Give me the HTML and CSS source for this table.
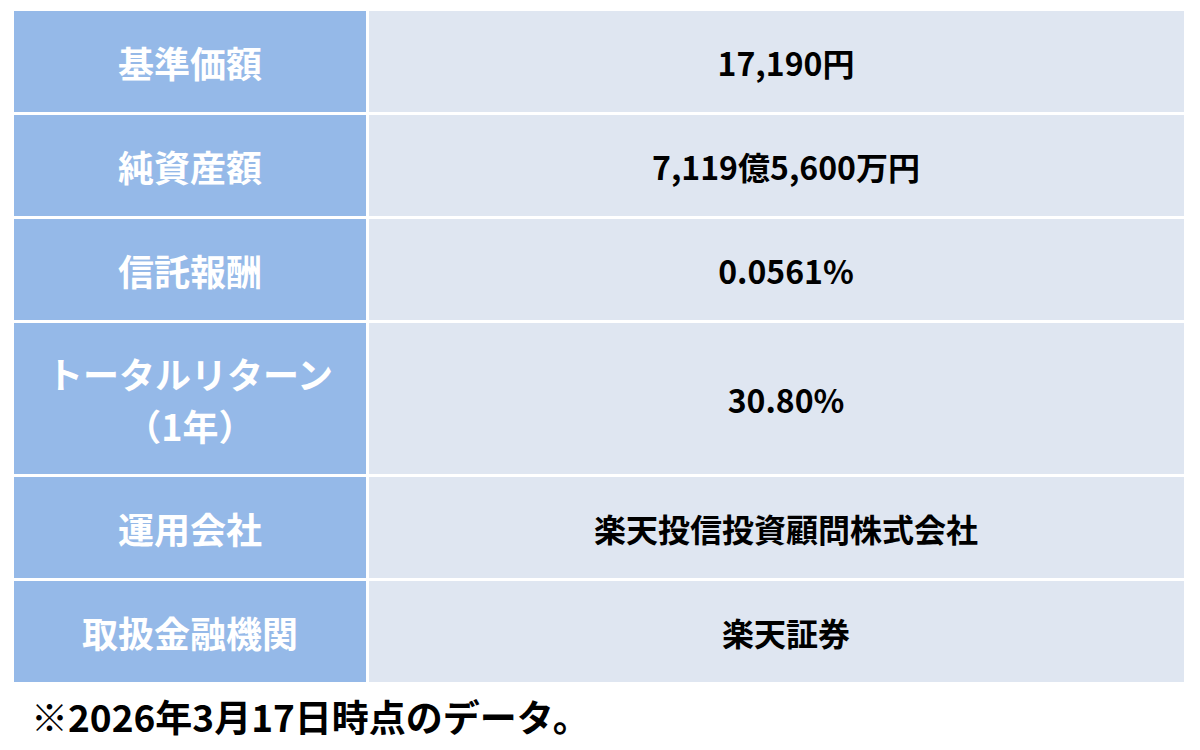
FILE: index.html
```html
<!DOCTYPE html>
<html lang="ja">
<head>
<meta charset="utf-8">
<title>ファンド情報</title>
<link rel="stylesheet" href="styles.css">
</head>
<body>
<div class="page">
  <div class="table">
    <div class="label">基準価額</div>
    <div class="value">17,190円</div>
    <div class="label">純資産額</div>
    <div class="value">7,119億5,600万円</div>
    <div class="label">信託報酬</div>
    <div class="value">0.0561%</div>
    <div class="label tall">トータルリターン<br>（1年）</div>
    <div class="value tall">30.80%</div>
    <div class="label">運用会社</div>
    <div class="value">楽天投信投資顧問株式会社</div>
    <div class="label">取扱金融機関</div>
    <div class="value">楽天証券</div>
  </div>
  <p class="note">※2026年3月17日時点のデータ。</p>
</div>
</body>
</html>
```

FILE: styles.css
```css
html, body {
  margin: 0;
  padding: 0;
  background: #ffffff;
}
body {
  font-family: "Noto Sans CJK JP", "Noto Sans", sans-serif;
  font-weight: 700;
}
.page {
  padding: 11px 0 0 14px;
}
.table {
  display: grid;
  grid-template-columns: 352px 815px;
  grid-template-rows: 101px 101px 101px 151px 101px 101px;
  gap: 3px;
}
.label, .value {
  display: flex;
  align-items: center;
  justify-content: center;
  text-align: center;
}
.label {
  background: #95b9e8;
  color: #ffffff;
  font-size: 36px;
  line-height: 52px;
}
.value {
  background: #dfe6f1;
  color: #000000;
  font-size: 32px;
  line-height: 44px;
  padding-left: 19px;
}
.note {
  margin: 0;
  padding: 11px 0 0 17px;
  font-size: 37px;
  line-height: 46px;
  color: #000000;
}
```
